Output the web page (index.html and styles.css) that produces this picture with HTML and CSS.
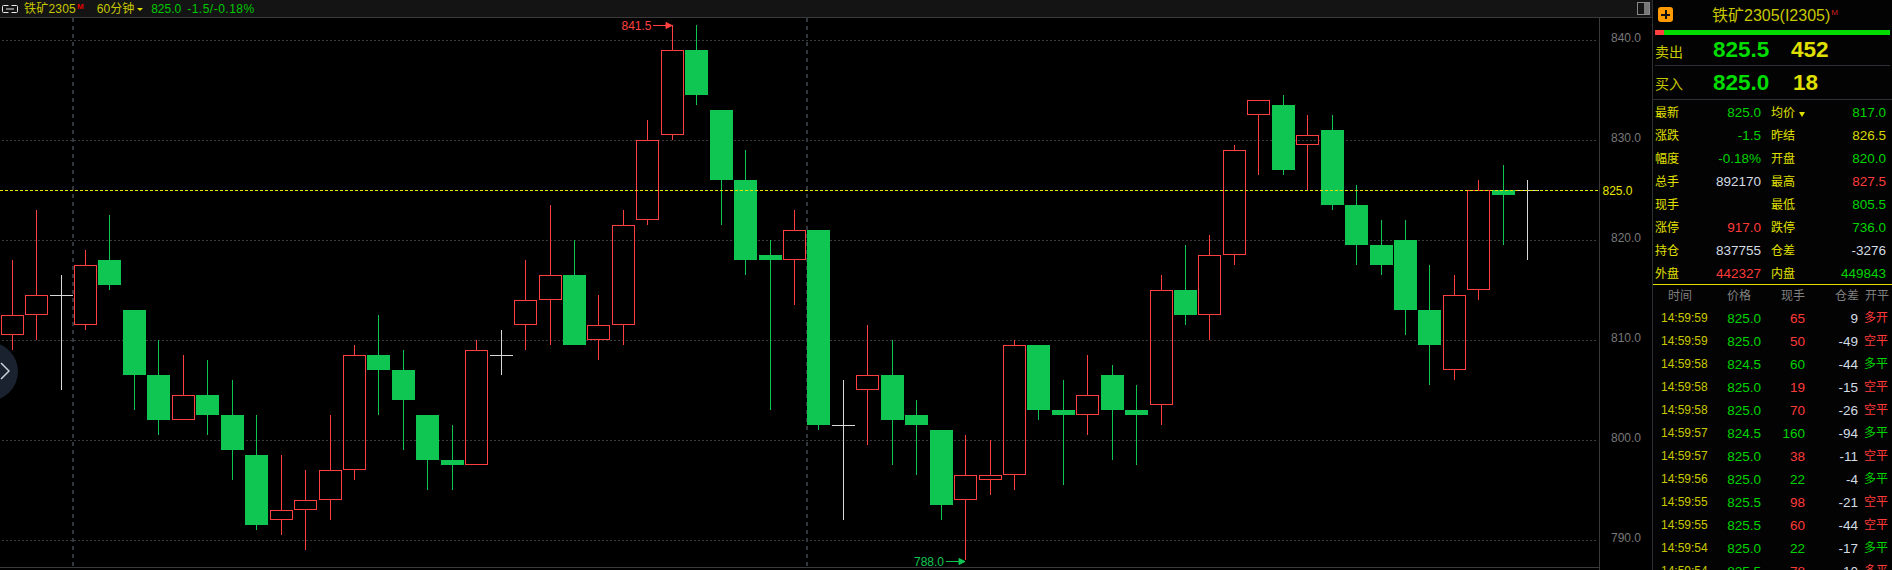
FILE: index.html
```html
<!DOCTYPE html>
<html lang="zh-CN">
<head>
    <meta charset="UTF-8">
    <title>铁矿2305 60分钟</title>
    <link rel="stylesheet" href="styles.css">
</head>
<body>
<div class="screen">
    <div class="chart-pane">
        <div class="topbar">
            <svg class="topbar__link" width="16" height="8" viewBox="0 0 16 8">
                <path d="M6.500 .5H1.500a1 1 0 0 0-1 1v5a1 1 0 0 0 1 1H6.500M9.500 .5h5a1 1 0 0 1 1 1v5a1 1 0 0 1-1 1H9.500M4 4h8"/>
            </svg>
            <span class="topbar__name">铁矿2305<sup class="topbar__mark">M</sup></span>
            <span class="topbar__period">60分钟</span>
            <span class="topbar__caret"></span>
            <span class="topbar__price">825.0</span>
            <span class="topbar__change">-1.5/-0.18%</span>
            <span class="topbar__layout"><i></i></span>
        </div>
        <div class="chart">
            <svg id="plot" class="plot" width="1652" height="552" viewBox="0 18 1652 552"></svg>
            <div class="chart__handle">
                <svg width="10" height="18" viewBox="0 0 10 18"><path d="M1 1l8 8-8 8"/></svg>
            </div>
        </div>
    </div>

    <div class="panel">
        <div class="panel__title">
            <span class="panel__plus"></span>
            <span class="panel__name">铁矿2305(I2305)<sup class="panel__mark">M</sup></span>
        </div>
        <div class="ratio"><div class="ratio__red"></div><div class="ratio__green"></div></div>

        <div class="book book--ask">
            <span class="book__label">卖出</span>
            <span class="book__price">825.5</span>
            <span class="book__size">452</span>
        </div>
        <div class="book book--bid">
            <span class="book__label">买入</span>
            <span class="book__price">825.0</span>
            <span class="book__size">18</span>
        </div>

        <div id="quotes" class="quotes"></div>

        <div class="ticks-head">
            <span>时间</span><span>价格</span><span>现手</span><span>仓差</span><span>开平</span>
        </div>
        <div id="ticks"></div>
    </div>
</div>

<script>
    (function() {
        // x = wick column, then high / body top / body bottom / low as pixel rows
        // r red hollow, g green filled, w white doji
        var candles = [
            ['r', 12, 260, 315, 335, 350], ['r', 36, 210, 295, 315, 340], ['w', 61, 275, 295, 295, 390],
            ['r', 85, 250, 265, 325, 330], ['g', 109, 215, 260, 285, 290], ['g', 134, 310, 310, 375, 410],
            ['g', 158, 340, 375, 420, 435], ['r', 183, 355, 395, 420, 420], ['g', 207, 360, 395, 415, 435],
            ['g', 232, 380, 415, 450, 480], ['g', 256, 415, 455, 525, 530], ['r', 281, 455, 510, 520, 535],
            ['r', 305, 470, 500, 510, 550], ['r', 330, 415, 470, 500, 520], ['r', 354, 345, 355, 470, 480],
            ['g', 378, 315, 355, 370, 415], ['g', 403, 350, 370, 400, 450], ['g', 427, 415, 415, 460, 490],
            ['g', 452, 425, 460, 465, 490], ['r', 476, 340, 350, 465, 465], ['w', 501, 330, 355, 355, 375],
            ['r', 525, 260, 300, 325, 350], ['r', 550, 205, 275, 300, 345], ['g', 574, 240, 275, 345, 345],
            ['r', 598, 295, 325, 340, 360], ['r', 623, 210, 225, 325, 345], ['r', 647, 120, 140, 220, 225],
            ['r', 672, 25, 50, 135, 140], ['g', 696, 25, 50, 95, 105], ['g', 721, 110, 110, 180, 225],
            ['g', 745, 150, 180, 260, 275], ['g', 770, 240, 255, 260, 410], ['r', 794, 210, 230, 260, 305],
            ['g', 818, 230, 230, 425, 430], ['w', 843, 380, 425, 425, 520], ['r', 867, 325, 375, 390, 445],
            ['g', 892, 340, 375, 420, 465], ['g', 916, 400, 415, 425, 475], ['g', 941, 430, 430, 505, 520],
            ['r', 965, 435, 475, 500, 560], ['r', 990, 440, 475, 480, 495], ['r', 1014, 340, 345, 475, 490],
            ['g', 1038, 345, 345, 410, 420], ['g', 1063, 380, 410, 415, 485], ['r', 1087, 355, 395, 415, 435],
            ['g', 1112, 365, 375, 410, 460], ['g', 1136, 385, 410, 415, 465], ['r', 1161, 275, 290, 405, 425],
            ['g', 1185, 245, 290, 315, 325], ['r', 1209, 235, 255, 315, 340], ['r', 1234, 145, 150, 255, 265],
            ['r', 1258, 100, 100, 115, 175], ['g', 1283, 95, 105, 170, 175], ['r', 1307, 115, 135, 145, 190],
            ['g', 1332, 115, 130, 205, 210], ['g', 1356, 185, 205, 245, 265], ['g', 1381, 220, 245, 265, 275],
            ['g', 1405, 220, 240, 310, 335], ['g', 1429, 265, 310, 345, 385], ['r', 1454, 275, 295, 370, 380],
            ['r', 1478, 180, 190, 290, 300], ['g', 1503, 165, 190, 195, 245], ['w', 1527, 180, 190, 190, 260]
        ];
        var axis = [[840, 40], [830, 140], [820, 240], [810, 340], [800, 440], [790, 540]];

        var svg = '';
        axis.forEach(function(a) {
            svg += `<line class="grid" x1="2" x2="1598" y1="${a[1] + .5}" y2="${a[1] + .5}"/>`;
            svg += `<text class="axis-label" x="1611" y="${a[1] + 2}">${a[0]}.0</text>`;
        });
        svg += '<line class="session" x1="73" x2="73" y1="18" y2="566"/>';
        svg += '<line class="session" x1="807" x2="807" y1="18" y2="566"/>';
        svg += '<line class="frame" x1="1599.5" x2="1599.5" y1="18" y2="570"/>';
        svg += '<line class="frame" x1="0" x2="1599" y1="567.5" y2="567.5"/>';

        candles.forEach(function(c) {
            var x = c[1], left = x - 11;
            if (c[0] === 'g') {
                svg += `<rect class="wick-g" x="${x}" y="${c[2]}" width="1" height="${c[5] - c[2]}"/>`;
                svg += `<rect class="body-g" x="${left}" y="${c[3]}" width="23" height="${c[4] - c[3]}"/>`;
            } else if (c[0] === 'r') {
                svg += `<rect class="wick-r" x="${x}" y="${c[2]}" width="1" height="${c[3] - c[2]}"/>`;
                svg += `<rect class="wick-r" x="${x}" y="${c[4]}" width="1" height="${c[5] - c[4]}"/>`;
                svg += `<rect class="body-r" x="${left + .5}" y="${c[3] + .5}" width="22" height="${c[4] - c[3] - 1}"/>`;
            } else {
                svg += `<rect class="doji" x="${x}" y="${c[2]}" width="1" height="${c[5] - c[2]}"/>`;
                svg += `<rect class="doji" x="${left}" y="${c[3]}" width="23" height="1"/>`;
            }
        });

        svg += '<line class="last" x1="0" x2="1600" y1="190.5" y2="190.5"/>';
        svg += '<text class="axis-label axis-label--last" x="1602.5" y="195">825.0</text>';
        svg += '<text class="extreme extreme--high" x="621.5" y="30">841.5</text>';
        svg += '<path class="arrow-r" d="M653 25.5h19M666 22.5l6 3-6 3z"/>';
        svg += '<text class="extreme extreme--low" x="914" y="566">788.0</text>';
        svg += '<path class="arrow-g" d="M946 561.5h19M959 558.5l6 3-6 3z"/>';
        document.getElementById('plot').innerHTML = svg;

        var quotes = [
            ['最新', '825.0', 'green', '均价', '817.0', 'green'],
            ['涨跌', '-1.5', 'green', '昨结', '826.5', 'yellow'],
            ['幅度', '-0.18%', 'green', '开盘', '820.0', 'green'],
            ['总手', '892170', 'white', '最高', '827.5', 'red'],
            ['现手', '', 'white', '最低', '805.5', 'green'],
            ['涨停', '917.0', 'red', '跌停', '736.0', 'green'],
            ['持仓', '837755', 'white', '仓差', '-3276', 'white'],
            ['外盘', '442327', 'red', '内盘', '449843', 'green']
        ];
        var html = '';
        quotes.forEach(function(q) {
            var mark = q[3] === '均价' ? '<i class="quote__down"></i>' : '';
            html += `<div class="quote"><span class="quote__label">${q[0]}</span><span class="quote__value ${q[2]}">${q[1]}</span></div>`;
            html += `<div class="quote"><span class="quote__label">${q[3]}${mark}</span><span class="quote__value ${q[5]}">${q[4]}</span></div>`;
        });
        document.getElementById('quotes').innerHTML = html;

        var ticks = [
            ['14:59:59', '825.0', '65', 'red', '9', '多开', 'red'],
            ['14:59:59', '825.0', '50', 'red', '-49', '空平', 'red'],
            ['14:59:58', '824.5', '60', 'green', '-44', '多平', 'green'],
            ['14:59:58', '825.0', '19', 'red', '-15', '空平', 'red'],
            ['14:59:58', '825.0', '70', 'red', '-26', '空平', 'red'],
            ['14:59:57', '824.5', '160', 'green', '-94', '多平', 'green'],
            ['14:59:57', '825.0', '38', 'red', '-11', '空平', 'red'],
            ['14:59:56', '825.0', '22', 'green', '-4', '多平', 'green'],
            ['14:59:55', '825.5', '98', 'red', '-21', '空平', 'red'],
            ['14:59:55', '825.5', '60', 'red', '-44', '空平', 'red'],
            ['14:59:54', '825.0', '22', 'green', '-17', '多平', 'green'],
            ['14:59:54', '825.5', '78', 'red', '-10', '多平', 'red']
        ];
        html = '';
        ticks.forEach(function(t) {
            html += `<div class="tick"><span class="tick__time">${t[0]}</span><span class="tick__num green">${t[1]}</span>`;
            html += `<span class="tick__num ${t[3]}">${t[2]}</span><span class="tick__num white">${t[4]}</span><span class="tick__flag ${t[6]}">${t[5]}</span></div>`;
        });
        document.getElementById('ticks').innerHTML = html;
    })();
</script>
</body>
</html>
```

FILE: styles.css
```css
html, body {
    margin: 0;
    padding: 0;
    background: #000;
}

.screen {
    display: flex;
    width: 1892px;
    height: 570px;
    overflow: hidden;
    font-family: "Liberation Sans", "Noto Sans CJK SC", sans-serif;
}

.chart-pane {
    width: 1652px;
    flex: none;
}

/* top bar */
.topbar {
    display: flex;
    align-items: center;
    height: 17px;
    box-sizing: content-box;
    background: #141414;
    border-bottom: 1px solid #3a3a3a;
    font-size: 12px;
    line-height: 17px;
    white-space: nowrap;
}
.topbar > span {
    position: relative;
    top: 1px;
}

.topbar__link {
    margin-left: 2px;
    flex: none;
}
.topbar__link path {
    fill: none;
    stroke: #e8e8e8;
    stroke-width: 1;
}

.topbar__name {
    margin-left: 6px;
    color: #c8c800;
    letter-spacing: .2px;
}
.topbar__mark {
    font-size: 8px;
    font-weight: bold;
    color: #e00000;
    line-height: 0;
    vertical-align: 4px;
    margin-left: 1px;
}

.topbar__period {
    margin-left: 13px;
    color: #c8c800;
}
.topbar__caret {
    margin: 0 0 0 3px;
    border-left: 3px solid transparent;
    border-right: 3px solid transparent;
    border-top: 3px solid #e0e000;
}

.topbar__price {
    margin-left: 8px;
    color: #00c800;
}
.topbar__change {
    margin-left: 6px;
    color: #00c800;
    letter-spacing: .5px;
}

.topbar__layout {
    margin-left: auto;
    margin-right: 2px;
    width: 11px;
    height: 11px;
    border: 1px solid #888;
    display: flex;
    justify-content: flex-end;
}
.topbar > .topbar__layout {
    top: 0;
}
.topbar__layout i {
    width: 5px;
    background: #777;
}

/* chart */
.chart {
    position: relative;
    height: 552px;
}
.plot {
    display: block;
}
.chart__handle {
    position: absolute;
    left: -41px;
    top: 324px;
    width: 59px;
    height: 59px;
    border-radius: 50%;
    background: #1a2230;
}
.chart__handle svg {
    position: absolute;
    right: 8px;
    top: 20px;
}
.chart__handle path {
    fill: none;
    stroke: #cdd3da;
    stroke-width: 1.5;
}

.grid {
    stroke: #3c3c3c;
    stroke-width: 1;
    stroke-dasharray: 2 2;
}
.session {
    stroke: #30363c;
    stroke-width: 2;
    stroke-dasharray: 4 4;
}
.last {
    stroke: #e8e800;
    stroke-width: 1;
    stroke-dasharray: 3 2;
}
.frame {
    stroke: #3a3a3a;
    stroke-width: 1;
}
.axis-label {
    font-size: 12px;
    fill: #787878;
}
.axis-label--last {
    fill: #e8e800;
}

.wick-g, .body-g {
    fill: #10c653;
}
.wick-r {
    fill: #ff4040;
}
.body-r {
    fill: none;
    stroke: #ff4040;
    stroke-width: 1;
}
.doji {
    fill: #d8d8d8;
}

.extreme {
    font-size: 12px;
}
.extreme--high {
    fill: #ff4040;
}
.extreme--low {
    fill: #10c653;
}
.arrow-r {
    fill: #ff4040;
    stroke: #ff4040;
}
.arrow-g {
    fill: #10c653;
    stroke: #10c653;
}

/* quote panel */
.panel {
    width: 239px;
    flex: none;
    border-left: 1px solid #2c2f33;
    background: #030303;
    overflow: hidden;
}

.panel__title {
    position: relative;
    height: 30px;
    box-sizing: border-box;
    padding-left: 59px;
    font-size: 16px;
    line-height: 32px;
    color: #c8c800;
    white-space: nowrap;
}
.panel__plus {
    position: absolute;
    left: 5px;
    top: 7px;
    width: 15px;
    height: 15px;
    border-radius: 3px;
    background:
        linear-gradient(#111, #111) center / 9px 2px no-repeat,
        linear-gradient(#111, #111) center / 2px 9px no-repeat,
        #ff9a00;
}
.panel__mark {
    font-size: 8px;
    color: #d02020;
    line-height: 0;
    vertical-align: 6px;
    margin-left: 1px;
}

.ratio {
    display: flex;
    height: 5px;
    margin: 0 2px;
}
.ratio__red {
    width: 9px;
    background: #ff4040;
}
.ratio__green {
    flex: 1;
    background: #00dc00;
}

.book {
    display: flex;
    align-items: center;
    margin: 0 2px;
    border-bottom: 1px solid #2c2f33;
    font-weight: bold;
    line-height: 24px;
}
.book--ask {
    height: 30px;
}
.book--bid {
    height: 33px;
    margin: 0;
    padding: 0 2px;
}
.book__label {
    width: 58px;
    flex: none;
    font-size: 14px;
    font-weight: normal;
    color: #c8c800;
    padding-top: 3px;
}
.book__price {
    width: 78px;
    flex: none;
    font-size: 22.5px;
    color: #00dc00;
}
.book__size {
    font-size: 22.5px;
    color: #e0e000;
}
.book--bid .book__size {
    padding-left: 2px;
}

.quotes {
    display: grid;
    grid-template-columns: 106px 115px;
    column-gap: 10px;
    row-gap: 5px;
    padding: 4px 0 0 2px;
}
.quote {
    display: flex;
    justify-content: space-between;
    line-height: 18px;
    height: 18px;
}
.quote__label {
    font-size: 12px;
    color: #e0e000;
}
.quote__value {
    font-size: 13.5px;
}
.quote__down {
    display: inline-block;
    margin-left: 4px;
    border-left: 3.5px solid transparent;
    border-right: 3.5px solid transparent;
    border-top: 5px solid #e0e000;
}

.green { color: #00d400; }
.red { color: #ff3a3a; }
.yellow { color: #d8d800; }
.white { color: #d4dce4; }

.ticks-head {
    display: grid;
    grid-template-columns: 59px 54px 54px 30px 30px;
    height: 23px;
    padding-left: 15px;
    border-top: 1px solid #e0e000;
    margin-top: 1px;
    box-sizing: border-box;
    font-size: 12px;
    line-height: 23px;
    color: #808080;
}

.tick {
    display: grid;
    grid-template-columns: 50px 50px 44px 53px 30px;
    height: 23px;
    padding-left: 8px;
    line-height: 23px;
    white-space: nowrap;
}
.tick__time {
    font-size: 12px;
    color: #c8c800;
}
.tick__num {
    font-size: 13.5px;
    text-align: right;
}
.tick__flag {
    font-size: 12px;
    padding-left: 6px;
}
```
